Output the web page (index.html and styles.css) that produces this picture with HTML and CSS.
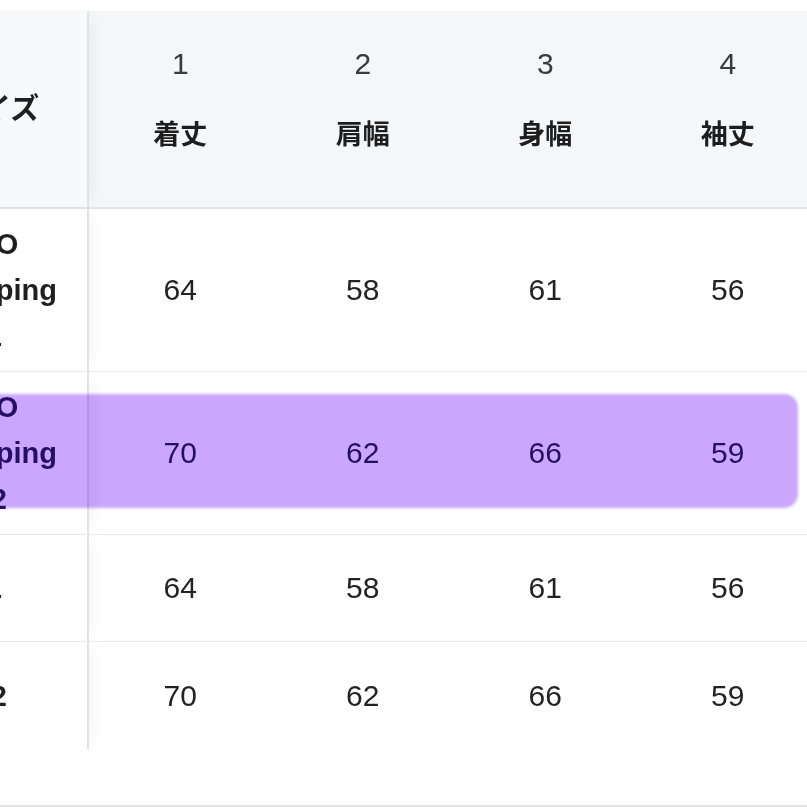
FILE: index.html
```html
<!DOCTYPE html>
<html lang="ja">
<head>
<meta charset="utf-8">
<title>サイズ表</title>
<link rel="stylesheet" href="styles.css">
</head>
<body>
<div class="sheet">
  <div class="table">
    <div class="row head">
      <div class="cell first"><div class="name">サイズ</div></div>
      <div class="cell"><span class="num">1</span><span class="lbl">着丈</span></div>
      <div class="cell"><span class="num">2</span><span class="lbl">肩幅</span></div>
      <div class="cell"><span class="num">3</span><span class="lbl">身幅</span></div>
      <div class="cell"><span class="num">4</span><span class="lbl">袖丈</span></div>
    </div>
    <div class="row tall">
      <div class="cell first"><div class="name">LOGO<br>Shipping<br>No.<span class="idx one">1</span></div></div>
      <div class="cell">64</div>
      <div class="cell">58</div>
      <div class="cell">61</div>
      <div class="cell">56</div>
    </div>
    <div class="row tall hl">
      <div class="cell first"><div class="name">LOGO<br>Shipping<br>No.<span class="idx">2</span></div></div>
      <div class="cell">70</div>
      <div class="cell">62</div>
      <div class="cell">66</div>
      <div class="cell">59</div>
    </div>
    <div class="row short">
      <div class="cell first"><div class="name">No.<span class="idx one">1</span></div></div>
      <div class="cell">64</div>
      <div class="cell">58</div>
      <div class="cell">61</div>
      <div class="cell">56</div>
    </div>
    <div class="row short last">
      <div class="cell first"><div class="name">No.<span class="idx">2</span></div></div>
      <div class="cell">70</div>
      <div class="cell">62</div>
      <div class="cell">66</div>
      <div class="cell">59</div>
    </div>
  </div>
  <div class="rule"></div>
</div>
</body>
</html>
```
FILE: styles.css
```css
html, body {
  margin: 0;
  padding: 0;
  background: #ffffff;
  overflow: hidden;
}
body {
  width: 807px;
  height: 807px;
  font-family: "Liberation Sans", "Noto Sans CJK JP", sans-serif;
  color: #222222;
}
.sheet {
  padding-top: 11px;
  width: 807px;
  overflow: hidden;
}
.table {
  margin-left: -74px;
  width: 893px;
}
.row {
  display: grid;
  grid-template-columns: 163px repeat(4, 182.5px);
  background: #ffffff;
  border-bottom: 1.5px solid #ececee;
  box-sizing: border-box;
}
.row.head {
  height: 198px;
  background: #f5f6f8;
  border-bottom: 2px solid #e4e5e8;
}
.row.tall { height: 163px; }
.row.short { height: 107px; }
.row.last { border-bottom: none; }

.cell {
  display: flex;
  align-items: center;
  justify-content: center;
  font-size: 30px;
  line-height: 46px;
  color: #232323;
}
.cell.first {
  justify-content: flex-start;
  padding-left: 7px;
  font-size: 29px;
  font-weight: 700;
  color: #1f1f1f;
  background: #ffffff;
  border-right: 2px solid #e2e2e5;
  box-shadow: 8px 0 16px -8px rgba(0, 0, 0, 0.07);
  position: relative;
}
.name { white-space: nowrap; }
.idx { margin-left: 11px; }
.idx.one { margin-left: 6px; }
.head .cell {
  flex-direction: column;
  justify-content: flex-start;
  padding-top: 35px;
  box-sizing: border-box;
}
.head .cell.first {
  flex-direction: row;
  justify-content: flex-start;
  padding-top: 0;
  padding-left: 27px;
  background: #f8f9fa;
}
.num {
  font-size: 30px;
  line-height: 36px;
  color: #3a3a3a;
}
.lbl {
  margin-top: 33px;
  font-size: 27px;
  line-height: 36px;
  font-weight: 700;
  color: #1d1d1d;
  font-family: "Noto Sans CJK JP", sans-serif;
}

.row.hl {
  position: relative;
}
.row.hl .cell { color: #2e1763; }
.row.hl::after {
  content: "";
  position: absolute;
  left: 40px;
  right: 21px;
  top: 22px;
  bottom: 26px;
  border-radius: 14px;
  background: #caa6fc;
  mix-blend-mode: multiply;
  filter: blur(1.5px);
  pointer-events: none;
}
.rule {
  margin-top: 56px;
  height: 2px;
  background: #e2e2e4;
}
```
